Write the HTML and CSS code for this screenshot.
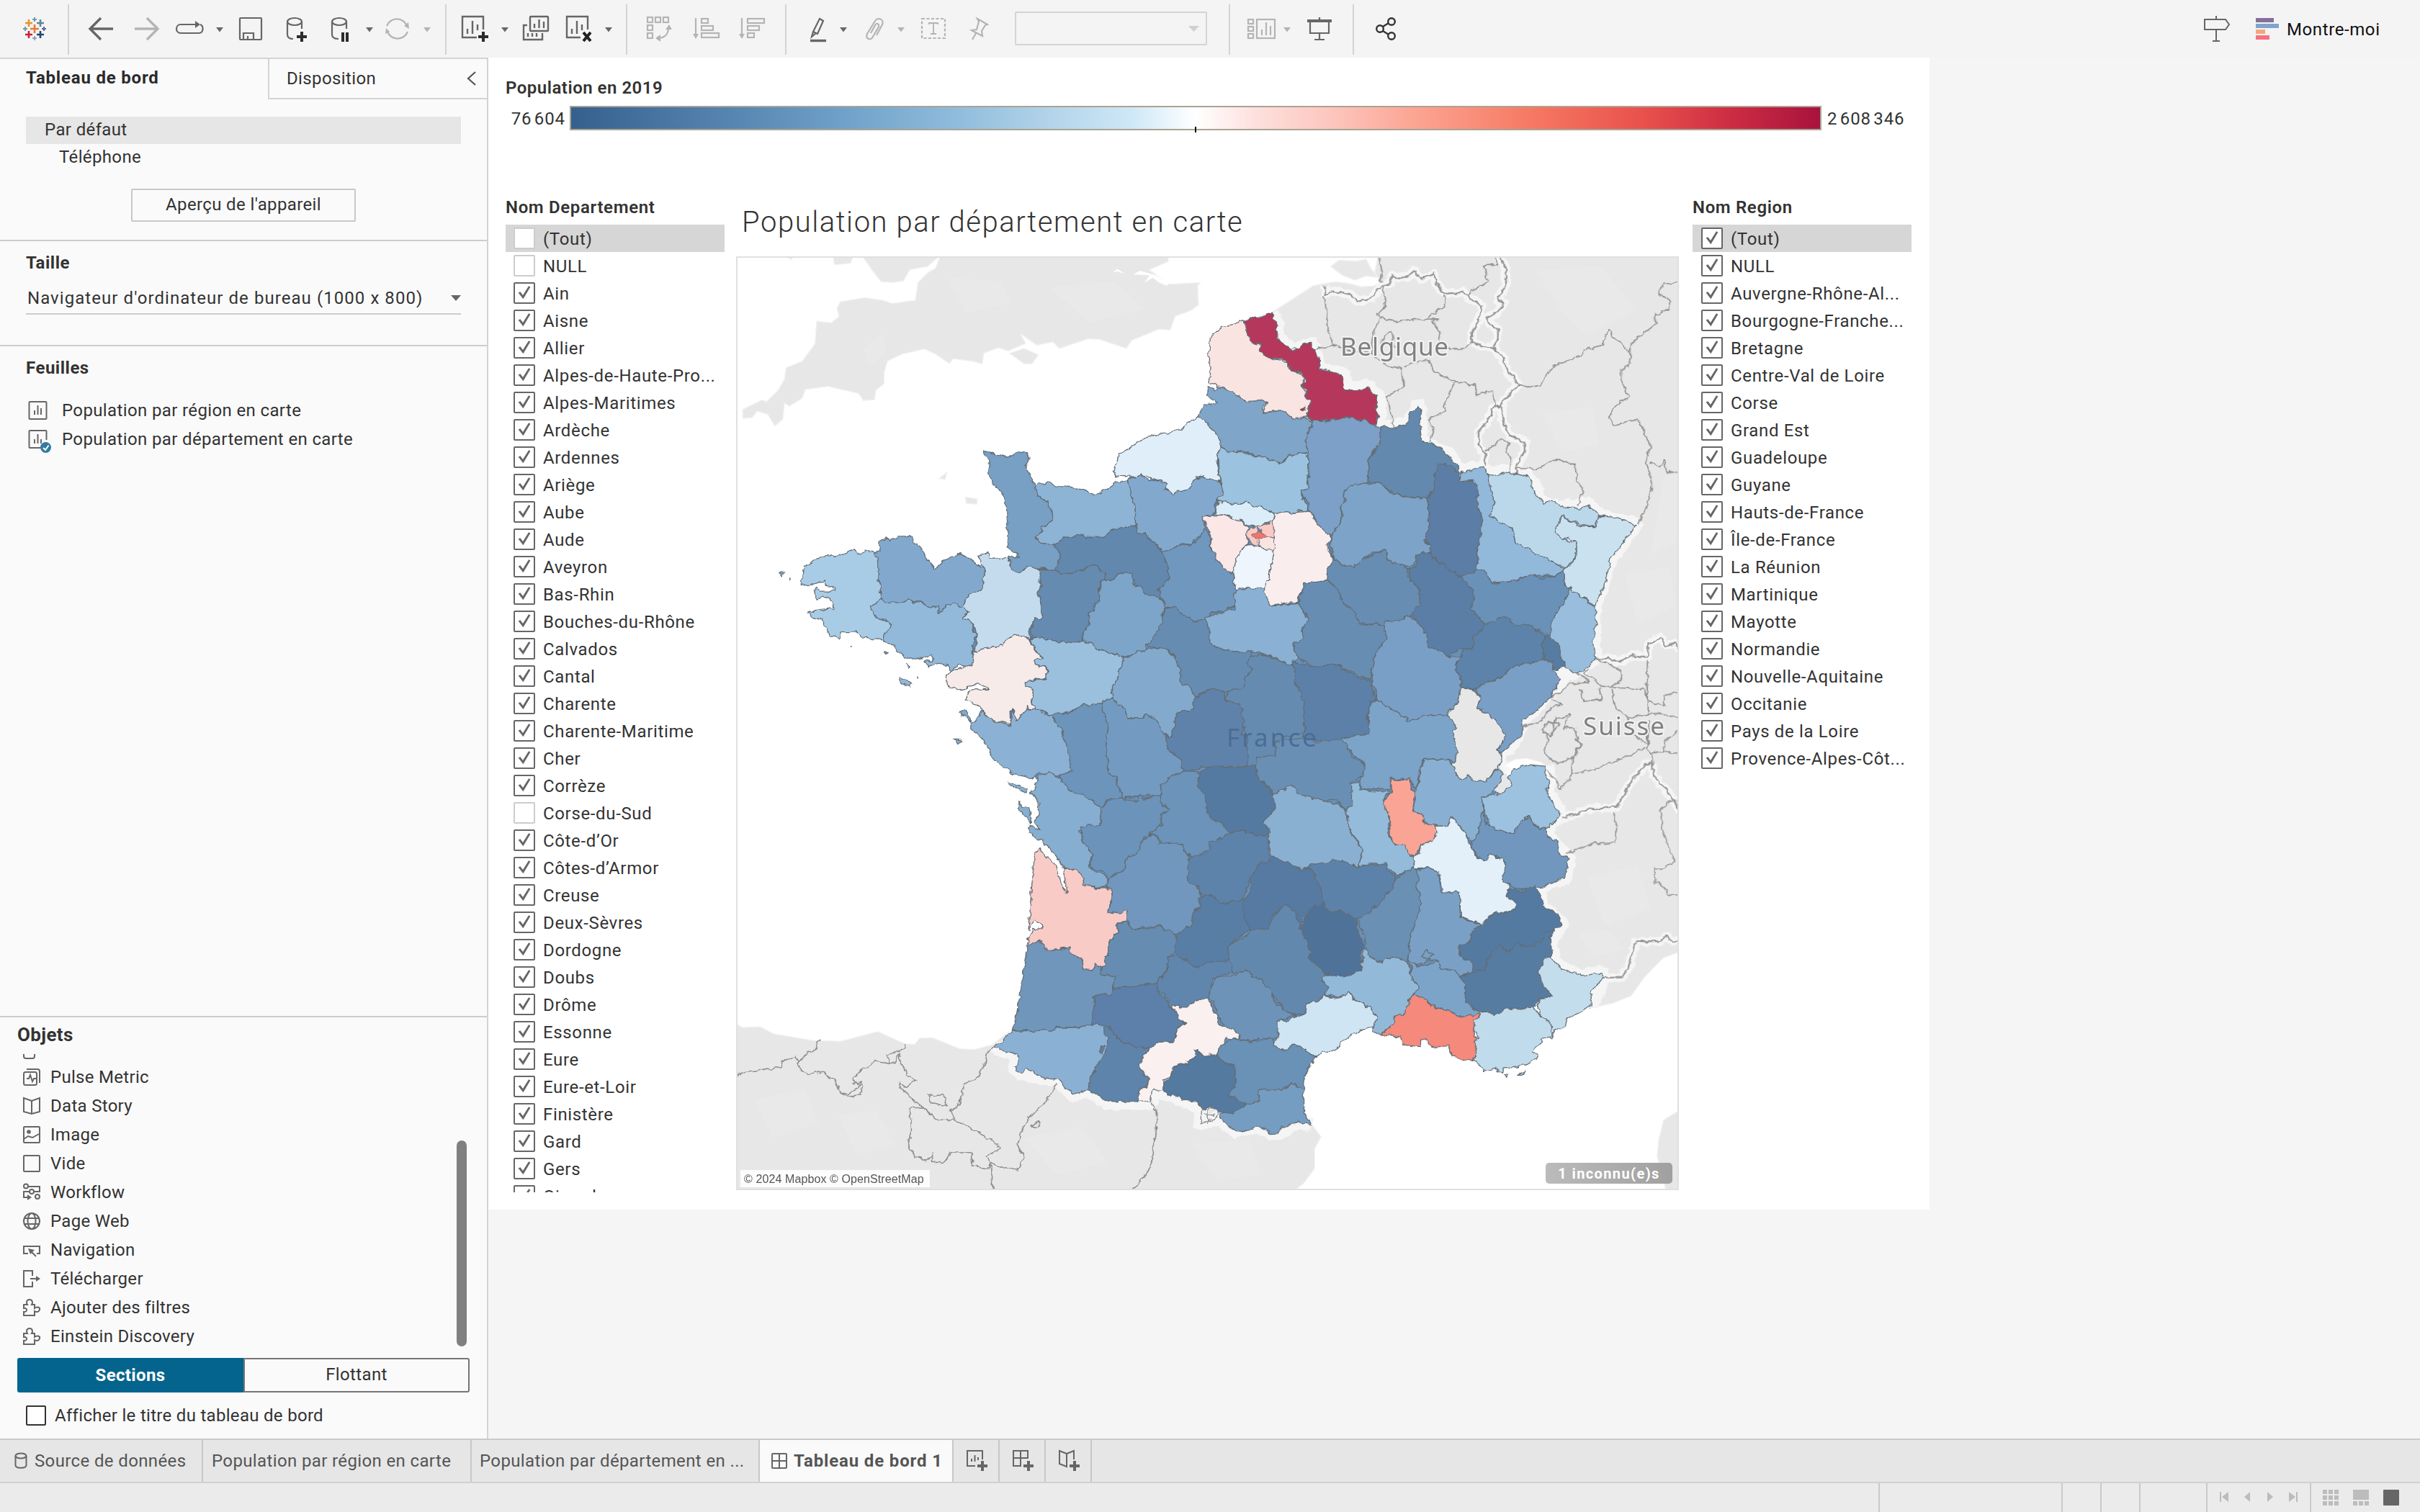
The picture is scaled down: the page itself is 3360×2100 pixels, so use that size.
FILE: index.html
```html
<!DOCTYPE html>
<html lang="fr">
<head>
<meta charset="utf-8">
<title>Tableau de bord 1</title>
<link rel="stylesheet" href="styles.css">
</head>
<body>
<div class="app">

<header class="toolbar">
  <svg width="94" height="80" viewBox="0 0 94 80" fill="none" stroke-width="2.6">
    <path stroke="#eb7a2f" d="M48 34v12M42 40h12"/>
    <path stroke="#e8932f" d="M40 27v10M35 32h10"/>
    <path stroke="#5b879b" d="M56 27v10M51 32h10"/>
    <path stroke="#c8233c" d="M40 43v10M35 48h10"/>
    <path stroke="#1f447e" d="M56 43v10M51 48h10"/>
    <g stroke-width="2"><path stroke="#7199a6" d="M48 24v6M45 27h6M35 37v6M32 40h6"/><path stroke="#5c6692" d="M61 37v6M58 40h6"/><path stroke="#9aa0be" d="M48 50v6M45 53h6"/></g>
  </svg>
  <i class="sep"></i>
  <svg width="76" height="80" viewBox="96 0 76 80" fill="none" stroke="#666" stroke-width="3.4"><path d="M157 40h-32M140 25l-15 15 15 15"/></svg>
  <svg width="58" height="80" viewBox="172 0 58 80" fill="none" stroke="#b4b4b4" stroke-width="3.4"><path d="M187 40h32M204 25l15 15-15 15"/></svg>
  <svg width="88" height="80" viewBox="230 0 88 80" fill="none" stroke="#666" stroke-width="2.2"><path d="M272 34h-21c-8 0-8 12 0 12h25c7 0 7-10 2-12"/><path fill="#666" stroke="none" d="M271 29l7 5-7 5zM300 38h10l-5 6.500z"/></svg>
  <svg width="64" height="80" viewBox="318 0 64 80" fill="none" stroke="#666" stroke-width="2.2"><rect x="333" y="25" width="30" height="30" rx="1"/><path d="M338 55v-9h14v9M344 55v-5"/></svg>
  <svg width="60" height="80" viewBox="382 0 60 80" fill="none" stroke="#666" stroke-width="2.2"><ellipse cx="409" cy="30" rx="10" ry="5"/><path d="M399 30v18c0 4 3 6 8 6M419 30v10"/><path stroke="#2b2b2b" stroke-width="4" d="M419 44v14M412 51h14"/></svg>
  <svg width="82" height="80" viewBox="442 0 82 80" fill="none" stroke="#666" stroke-width="2.2"><ellipse cx="471" cy="30" rx="10" ry="5"/><path d="M461 30v18c0 4 3 6 9 6M481 30v10"/><path stroke="#2b2b2b" stroke-width="4" d="M476 45v13M482 45v13"/><path fill="#666" stroke="none" d="M508 38h10l-5 6.500z"/></svg>
  <svg width="94" height="80" viewBox="524 0 94 80" fill="none" stroke="#b4b4b4" stroke-width="2.2"><path d="M537 36a15 15 0 0 1 28 0M566 44a15 15 0 0 1-28 0"/><path fill="#b4b4b4" stroke="none" d="M561 36l6-5 1 9zM541 44l-5-5-1 8zM588 38h10l-5 6.500z"/></svg>
  <i class="sep"></i>
  <svg width="92" height="80" viewBox="620 0 92 80" fill="none" stroke="#666" stroke-width="2.4"><path d="M662 52h-20V23h29v18M649 47v-7M656 47V29M663 42v-8"/><path stroke="#2b2b2b" stroke-width="4" d="M671 44v14M664 51h14"/><path fill="#666" stroke="none" d="M696 38h10l-5 6.500z"/></svg>
  <svg width="62" height="80" viewBox="712 0 62 80" fill="none" stroke="#666" stroke-width="2.4"><rect x="736" y="23" width="25" height="20" rx="1"/><path d="M732 35h-5v20h26v-9M742 39v-6M748.500 39V27M755 39V30M733 51v-5M739 51v-5M745 51v-5"/></svg>
  <svg width="95" height="80" viewBox="774 0 95 80" fill="none" stroke="#666" stroke-width="2.4"><path d="M806 52h-19V23h29v18M794 47v-7M801 47V29M808 42v-8"/><path stroke="#222" stroke-width="4" d="M810 45l10 12M820 45l-10 12"/><path fill="#666" stroke="none" d="M840 38h10l-5 6.500z"/></svg>
  <i class="sep"></i>
  <svg width="75" height="80" viewBox="871 0 75 80" fill="none" stroke="#b4b4b4" stroke-width="2.2"><rect x="899" y="24" width="7" height="7"/><rect x="910" y="24" width="7" height="7"/><rect x="921" y="24" width="7" height="7"/><rect x="899" y="35" width="7" height="7"/><rect x="899" y="46" width="7" height="7"/><path d="M928 39c0 8-5 13-13 14"/><path fill="#b4b4b4" stroke="none" d="M924 41l5-7 4 7zM917 48l-7 5 7 5z"/></svg>
  <svg width="64" height="80" viewBox="946 0 64 80" fill="none" stroke="#b4b4b4" stroke-width="2.2"><path d="M966 25v24"/><path fill="#b4b4b4" stroke="none" d="M962 47h8l-4 7z"/><rect x="974" y="26" width="9" height="6"/><rect x="974" y="36" width="16" height="6"/><rect x="974" y="46" width="24" height="6"/></svg>
  <svg width="80" height="80" viewBox="1010 0 80 80" fill="none" stroke="#b4b4b4" stroke-width="2.200"><path d="M1030 25v24"/><path fill="#b4b4b4" stroke="none" d="M1026 47h8l-4 7z"/><rect x="1038" y="26" width="23" height="6"/><rect x="1038" y="36" width="16" height="6"/><rect x="1038" y="46" width="9" height="6"/></svg>
  <i class="sep"></i>
  <svg width="94" height="80" viewBox="1092 0 94 80" fill="none" stroke="#666" stroke-width="2.200"><path d="M1138 26l5 3-8 18-6-3zM1129 44l-2 7 6-5"/><path stroke-width="3.400" d="M1125 56.500h22"/><path fill="#666" stroke="none" d="M1166 38h10l-5 6.500z"/></svg>
  <svg width="78" height="80" viewBox="1186 0 78 80" fill="none" stroke="#b4b4b4" stroke-width="2.200"><path d="M1217 49l8-15c3-7-6-11-10-5l-11 18c-3 7 5 10 8 4l8-14c1-5-4-5-5-2l-6 11"/><path fill="#b4b4b4" stroke="none" d="M1246 38h10l-5 6.500z"/></svg>
  <svg width="64" height="80" viewBox="1264 0 64 80" fill="none" stroke="#b4b4b4" stroke-width="2.200"><rect x="1280" y="26" width="32" height="27" stroke-dasharray="4 2.500"/><path stroke-width="1.800" d="M1290 34v-2h12v2M1296 32v15M1292 47h8"/></svg>
  <svg width="66" height="80" viewBox="1328 0 66 80" fill="none" stroke="#b4b4b4" stroke-width="2.200"><path d="M1357 26l14 8-3 1-5 8 1 7-15-8 7-1 3-11zM1355 46l-5 9"/></svg>
  <div class="combo"><svg width="16" height="10" viewBox="0 0 16 10"><path fill="#d0d0d0" d="M0 1h15L7.500 9z"/></svg></div>
  <i class="sep"></i>
  <svg width="94" height="80" viewBox="1708 0 94 80" fill="none" stroke="#b4b4b4" stroke-width="2.200"><rect x="1733" y="27" width="7" height="6"/><rect x="1733" y="37" width="7" height="6"/><rect x="1733" y="47" width="7" height="6"/><rect x="1745" y="27" width="25" height="26"/><path d="M1752 49v-8M1758 49V31M1764 49V36"/><path fill="#b4b4b4" stroke="none" d="M1782 38h10l-5 6.500z"/></svg>
  <svg width="76" height="80" viewBox="1802 0 76 80" fill="none" stroke="#666" stroke-width="2.200"><path stroke-width="4" d="M1815 29h34"/><path d="M1819 30v16h26V30M1832 24v4M1832 46v9M1825 55h14"/></svg>
  <i class="sep"></i>
  <svg width="80" height="80" viewBox="1880 0 80 80" fill="none" stroke="#333" stroke-width="2.400"><circle cx="1932" cy="30" r="4.800"/><circle cx="1916" cy="40" r="4.800"/><circle cx="1932" cy="50" r="4.800"/><path d="M1920 37l8-5M1920 43l8 5"/></svg>
  <span class="grow"></span>
  <svg width="72" height="80" viewBox="3040 0 72 80" fill="none" stroke="#666" stroke-width="2"><path d="M3061 27h29l5 7-5 7h-29zM3077 22v5M3077 41v15M3072 57h10"/></svg>
  <svg width="52" height="80" viewBox="3112 0 52 80"><path fill="#85709a" d="M3132 25h25v6h-25z"/><path fill="#80a4cd" d="M3132 33h32v6h-32z"/><path fill="#f3a77c" d="M3132 41h13v6h-13z"/><path fill="#f8707f" d="M3132 49h19v6h-19z"/></svg>
  <span class="showme">Montre-moi</span>
</header>

<main class="body">
<aside class="side">
  <div class="tabs">
    <div class="tab tab-on">Tableau de bord</div>
    <div class="tab tab-off">Disposition<svg width="14" height="20" viewBox="0 0 14 20" fill="none" stroke="#555" stroke-width="2.200"><path d="M12 1L2 10l10 9"/></svg></div>
  </div>
  <div class="devices">
    <div class="device device-on">Par défaut</div>
    <div class="device phone">Téléphone</div>
    <button class="preview">Aperçu de l'appareil</button>
  </div>
  <section class="block">
    <h2>Taille</h2>
    <div class="select"><span>Navigateur d'ordinateur de bureau (1000 x 800)</span><svg width="14" height="8" viewBox="0 0 14 8"><path fill="#666" d="M0 0h14L7 8z"/></svg></div>
  </section>
  <section class="block sheets">
    <h2>Feuilles</h2>
    <div class="sheet"><svg width="40" height="40" viewBox="0 0 40 40" fill="none" stroke="#666" stroke-width="2"><rect x="4.500" y="8" width="24" height="24" rx="1"/><path d="M12 26v-6M16.500 26V13M21 26v-9"/></svg><span>Population par région en carte</span></div>
    <div class="sheet"><svg width="40" height="40" viewBox="0 0 40 40" fill="none" stroke="#666" stroke-width="2"><path d="M20 32H5.500q-1 0-1-1V9q0-1 1-1h22q1 0 1 1v12M12 26v-6M16.500 26V13M21 26v-6"/><circle cx="27.500" cy="31.500" r="7.500" fill="#2f7c9e" stroke="none"/><path stroke="#fff" d="M24 32l3 3 4.500-6.500"/></svg><span>Population par département en carte</span></div>
  </section>
  <section class="objects">
    <h2>Objets</h2>
    <div class="scroller">
      <ul>
        <li><svg viewBox="0 0 24 24"><rect x="1" y="1" width="15" height="25" rx="3"/></svg>Extension</li>
        <li><svg viewBox="0 0 24 24"><rect x="1" y="5" width="18" height="18" rx="2.500"/><path d="M5 1h15q3 0 3 3v16M5 14h3l2-5 3 9 2-4h3"/></svg>Pulse Metric</li>
        <li><svg viewBox="0 0 24 24"><path d="M12 5L1 1v19l11 3 11-3V1zM12 5v18"/></svg>Data Story</li>
        <li><svg viewBox="0 0 24 24"><rect x="1" y="1" width="22" height="22" rx="1"/><path d="M1 18l6-4 6 2 9-5"/><circle class="solid" cx="8" cy="8" r="2.800"/></svg>Image</li>
        <li><svg viewBox="0 0 24 24"><rect x="1" y="1" width="22" height="22" rx="1"/></svg>Vide</li>
        <li><svg viewBox="0 0 24 24"><circle cx="4" cy="3.500" r="3"/><circle cx="12" cy="11" r="3"/><circle cx="20" cy="18" r="3"/><path d="M7 4h16v7h-8M9 11H1v8h7"/><path class="solid" d="M6 15l6 4-6 4z"/></svg>Workflow</li>
        <li><svg viewBox="0 0 24 24"><circle cx="12" cy="12" r="11"/><ellipse cx="12" cy="12" rx="5.500" ry="11"/><path d="M2 8h20M2 16h20"/></svg>Page Web</li>
        <li><svg viewBox="0 0 24 24"><path d="M7 17H1V7h22v10h-4M10 13l8 8"/><path class="solid" d="M7 10l9 2-6 6z"/></svg>Navigation</li>
        <li><svg viewBox="0 0 24 24"><path d="M13 8V1H1v22h12v-7M10 12h10"/><path class="solid" d="M18 8l6 4-6 4z"/></svg>Télécharger</li>
        <li><svg viewBox="0 0 24 24"><path d="M1 23v-5c5 1 6-6 0-5V8h5c-2-3-1-7 3-7s5 4 3 7h4v5c4-3 8-1 7 2s-4 4-7 2v6z"/></svg>Ajouter des filtres</li>
        <li><svg viewBox="0 0 24 24"><path d="M1 23v-5c5 1 6-6 0-5V8h5c-2-3-1-7 3-7s5 4 3 7h4v5c4-3 8-1 7 2s-4 4-7 2v6z"/></svg>Einstein Discovery</li>
      </ul>
      <div class="track"><i class="thumb"></i></div>
    </div>
    <div class="segment"><b>Sections</b><span>Flottant</span></div>
    <label class="show-title"><i></i>Afficher le titre du tableau de bord</label>
  </section>
</aside>

<div class="workspace">
<div class="board">
  <div class="legend">
    <h3>Population en 2019</h3>
    <div class="scale"><span class="min">76 604</span><div class="ramp"><i class="mid"></i></div><span class="max">2 608 346</span></div>
  </div>
  <div class="columns">
    <div class="filter">
      <h3>Nom Departement</h3>
      <ul class="dep">
        <li class="all"><i></i>(Tout)</li><li><i></i>NULL</li>
        <li class="on"><i></i>Ain</li><li class="on"><i></i>Aisne</li><li class="on"><i></i>Allier</li><li class="on"><i></i>Alpes-de-Haute-Pro...</li>
        <li class="on"><i></i>Alpes-Maritimes</li><li class="on"><i></i>Ardèche</li><li class="on"><i></i>Ardennes</li><li class="on"><i></i>Ariège</li>
        <li class="on"><i></i>Aube</li><li class="on"><i></i>Aude</li><li class="on"><i></i>Aveyron</li><li class="on"><i></i>Bas-Rhin</li>
        <li class="on"><i></i>Bouches-du-Rhône</li><li class="on"><i></i>Calvados</li><li class="on"><i></i>Cantal</li><li class="on"><i></i>Charente</li>
        <li class="on"><i></i>Charente-Maritime</li><li class="on"><i></i>Cher</li><li class="on"><i></i>Corrèze</li><li><i></i>Corse-du-Sud</li>
        <li class="on"><i></i>Côte-d’Or</li><li class="on"><i></i>Côtes-d’Armor</li><li class="on"><i></i>Creuse</li><li class="on"><i></i>Deux-Sèvres</li>
        <li class="on"><i></i>Dordogne</li><li class="on"><i></i>Doubs</li><li class="on"><i></i>Drôme</li><li class="on"><i></i>Essonne</li>
        <li class="on"><i></i>Eure</li><li class="on"><i></i>Eure-et-Loir</li><li class="on"><i></i>Finistère</li><li class="on"><i></i>Gard</li>
        <li class="on"><i></i>Gers</li><li class="on"><i></i>Gironde</li>
      </ul>
    </div>
    <div class="viz">
      <h1>Population par département en carte</h1>
      <div class="map">
<svg width="1309" height="1297" viewBox="1022 356 1309 1297">
  <defs>
    <filter id="rough" filterUnits="userSpaceOnUse" x="1022" y="356" width="1309" height="1297">
      <feTurbulence type="fractalNoise" baseFrequency="0.11" numOctaves="2" seed="4" result="n"/>
      <feDisplacementMap in="SourceGraphic" in2="n" scale="8" xChannelSelector="R" yChannelSelector="G"/>
    </filter>
  </defs>
  <!-- land -->
  <g fill="#e7e7e7" stroke="#f3f3f3" stroke-width="3">
    <g transform="translate(1020 350) scale(.44643)">
      <path d="M25 518L25 490 85 460 100 465 135 430 155 395 160 360 210 340 250 285 255 215 300 220 325 200 318 175 328 155 405 142 460 150 490 160 562 150 570 95 600 65 625 50 640 10 1350 10 1348 30 1290 55 1350 100 1448 95 1440 105 1443 165 1420 182 1370 200 1355 243 1320 240 1235 275 1218 300 1135 272 1100 270 1010 300 990 280 940 290 890 255 905 285 850 308 820 298 775 315 770 348 740 340 680 332 668 347 620 315 590 302 520 318 475 340 465 375 465 410 440 430 435 460 400 462 385 440 340 430 290 418 220 428 210 455 170 480 155 470 150 520 125 542 103 505 70 495 55 515Z"/>
      <path d="M855 315L900 300 945 320 925 348 900 348ZM395 10L430 60 455 92 490 95 525 90 545 55 600 45 640 10ZM305 10L310 40 360 35 370 10ZM635 705L660 685 655 708ZM717 762L755 768 753 785 720 782ZM155 10L175 24 190 10Z"/>
      <path fill="#fff" stroke="none" d="M1175 65L1190 52 1213 68 1190 60ZM1240 70L1260 58 1310 72 1350 95 1345 105 1320 95 1300 80 1275 95 1290 72Z"/>
    </g>
    <g transform="translate(1640 350) scale(.44643)">
      <path d="M195 214L283 187 410 105 445 98 480 92 520 97 560 108 600 105 622 92 600 70 612 10 1560 10 1560 2174 1500 2196 1440 2257 1400 2314 1340 2338 1275 2352 900 1900 500 1200 300 400Z"/>
      <path d="M465 45L490 25 545 28 575 22 590 50 612 80 575 75 540 88 500 72Z"/>
    </g>
    <g transform="translate(1020 1000) scale(.44643 .42091)">
      <path d="M0 1000L25 1015 80 1012 120 1035 240 1057 330 1060 445 1028 530 1068 560 1070 575 1050 615 1048 700 1085 745 1087 800 1072 850 1030 1200 1000 1700 1200 1795 1335 1824 1375 1804 1415 1804 1480 1769 1530 1729 1562 0 1562Z"/>
    </g>
    <g transform="translate(1640 1000) scale(.44643 .42091)">
      <path d="M1560 1280L1500 1320 1485 1385 1480 1440 1510 1562 1560 1562Z"/>
      <path fill="#fff" d="M1015 185L1000 150 1040 130 1075 127 1120 140 1135 153 1080 150 1030 180Z"/>
    </g>
  </g>
  <!-- relief -->
  <g fill="#efefef" opacity=".28">
    <g transform="translate(1640 350) scale(.44643)"><path d="M1100 60L1300 40 1420 180 1260 260 1180 180ZM1500 700L1548 690 1548 900 1460 940ZM1380 1000L1520 980 1540 1100 1420 1160ZM1120 500L1280 480 1300 600 1180 620Z"/></g>
    <g transform="translate(1020 1000) scale(.44643 .42091)"><path d="M60 1250L220 1220 260 1330 120 1380ZM900 1380L1080 1340 1160 1460 1000 1500ZM320 1300L440 1290 500 1400 380 1440ZM1420 1400L1600 1380 1640 1500 1500 1520Z"/></g>
    <g transform="translate(1640 1000) scale(.44643 .42091)"><path d="M1260 520L1420 480 1460 620 1320 680ZM1230 700L1330 690 1380 760 1280 780Z"/></g>
    <g transform="translate(1020 350) scale(.44643)"><path d="M660 80L830 90 860 160 720 190ZM980 110L1180 90 1280 180 1100 220ZM400 300L460 250 470 310 420 360Z"/></g>
  </g>
  <!-- borders of neighbouring countries -->
  <g filter="url(#rough)" fill="none" stroke-linejoin="round">
    <g stroke="#f5f5f5" stroke-width="46">
      <g transform="translate(1640 350) scale(.44643)">
        <path d="M283 188L298 230 300 270 345 310 405 285 432 365 500 380 510 430 580 420 612 450 615 510 602 540 660 547 710 530 738 480 748 592 835 635 868 685 935 670 958 690 1015 683 1080 700 1125 785 1190 795 1265 785 1300 822 1413 848 1335 955 1285 1102 1280 1215 1288 1265 1225 1308 1160 1305 1182 1330 1062 1455 1030 1530 990 1560"/>
        <path stroke-width="28" d="M445 105L450 130 480 122 520 130 550 152 590 145 625 105 650 95 655 75 700 80 725 58 745 85 785 68 795 100 820 130 880 125 895 145 935 165 930 200 905 250 905 280 940 295 975 300 1000 330 1015 370 1050 415 1030 430 1005 460 995 480 1000 520 1020 570 1070 590 1070 620 1045 660 1045 690M990 10L1010 50 1010 100 985 150 1005 160 980 190 950 205 960 225 985 240 985 270 970 295M995 480L975 480 950 530 925 560 925 600 945 630 945 665M1288 1265L1330 1265 1360 1275 1400 1255 1450 1260 1455 1220 1490 1200 1510 1225 1535 1215 1552 1240"/>
      </g>
      <g transform="translate(1640 1000) scale(.44643 .42091)">
        <path d="M990 105L985 160 1005 180M1135 153L1145 200 1135 235 1175 300 1175 320 1140 345 1140 385 1205 460 1195 520 1105 550 1125 615 1185 675 1150 720 1152 780 1185 825 1250 845 1305 833 1312 850 1275 945"/>
        <path stroke-width="28" d="M1465 145L1445 145 1400 205 1350 290 1280 290 1185 325M1465 145L1470 185 1530 260 1552 305M1310 850L1370 850 1390 820 1415 730 1490 730 1510 710 1530 735 1552 720"/>
      </g>
      <g transform="translate(1020 1000) scale(.44643 .42091)">
        <path d="M805 1078L850 1095 885 1105 872 1145 892 1165 960 1180 1010 1188 1050 1235 1100 1222 1160 1262 1255 1262 1293 1262 1298 1220 1400 1255 1455 1285 1450 1330 1509 1315 1554 1355 1629 1340 1669 1365 1694 1362 1750 1328 1796 1335"/>
      </g>
    </g>
    <g stroke="#8c8c8c" stroke-width="3.600">
      <g transform="translate(1640 350) scale(.44643)">
        <path stroke-width="5" stroke="#929292" d="M445 105L450 130 480 122 520 130 550 152 590 145 625 105 650 95 655 75 700 80 725 58 745 85 785 68 795 100 820 130 880 125 895 145 935 165 930 200 905 250 905 280 940 295 975 300 1000 330 1015 370 1050 415 1030 430 1005 460 995 480 1000 520 1020 570 1070 590 1070 620 1045 660 1045 690M990 10L1010 50 1010 100 985 150 1005 160 980 190 950 205 960 225 985 240 985 270 970 295M995 480L975 480 950 530 925 560 925 600 945 630 945 665M1288 1265L1330 1265 1360 1275 1400 1255 1450 1260 1455 1220 1490 1200 1510 1225 1535 1215 1552 1240"/>
        <path d="M612 10L625 60 620 95M978 10L980 40 940 38 955 95 905 115 895 145M630 105L635 170 610 190 615 205 660 215 720 210 800 208 780 215 805 250 800 275 835 300 880 300 905 285M820 135L815 170 770 205M445 135L450 180 455 240 475 290 430 300 345 300M475 290L520 305 590 315 600 250 615 210M590 315L640 355 685 360 690 420 635 450 650 480 660 547M690 355L770 335 785 370 850 405 820 470 820 495 770 520 785 560 770 592M850 405L915 415 920 445 970 430 975 480M1050 415L1080 420 1120 415 1130 385 1160 355 1240 325 1250 305 1310 290 1330 240 1345 265 1395 310 1395 350 1370 365 1370 400 1390 450 1350 480 1330 515 1350 540 1420 520 1440 560 1460 605 1445 650 1465 720 1445 800 1420 848M1395 310L1400 285 1430 260 1475 225 1475 195 1515 180 1520 150 1485 130 1500 100 1552 95M1455 655L1490 670 1500 650 1510 680 1552 690M945 620L975 600 985 585 1020 590 1010 625 1025 640 1020 680M1045 670L1100 675 1170 645 1225 665 1230 710 1250 735 1235 790M620 290L630 255 655 250 665 300"/>
        <path d="M1225 1308L1270 1335 1210 1345 1180 1370 1145 1385M1288 1265L1320 1280 1365 1300 1370 1330 1340 1355 1300 1350 1285 1330 1250 1310 1265 1300M1240 1360L1255 1400 1305 1390 1300 1355M1340 1355L1440 1360 1450 1395 1500 1410 1505 1380 1552 1365M1450 1270L1448 1330 1450 1360M1340 1360L1350 1420 1390 1450 1400 1500M1390 1450L1440 1440 1480 1435 1552 1450M1060 1478L1120 1460 1145 1420 1180 1410 1150 1390M1125 1490L1150 1510 1165 1450 1210 1440 1190 1480 1225 1480 1240 1540 1225 1568M1120 1490L1140 1460 1175 1470 1150 1500M1450 1350L1450 1440M1400 1500L1450 1530 1455 1480"/>
      </g>
      <g transform="translate(1640 1000) scale(.44643 .42091)">
        <path stroke-width="5" stroke="#929292" d="M1465 145L1445 145 1400 205 1350 290 1280 290 1185 325M1465 145L1470 185 1530 260 1552 305M1310 850L1370 850 1390 820 1415 730 1490 730 1510 710 1530 735 1552 720M990 105L985 160 1005 180"/>
        <path d="M1225 60L1245 80 1215 125 1170 145 1130 110 1140 60 1125 30M1215 120L1215 185 1180 225 1140 165M1215 180L1300 155 1450 90 1455 0M1450 90L1465 125 1465 145M1455 110L1500 105 1552 110M1500 105L1505 70 1552 30M1530 260L1490 300 1500 380 1535 465 1500 490 1470 490 1475 535 1500 550 1515 580 1552 572M1345 305L1355 350 1350 405 1270 410 1195 440"/>
      </g>
      <g transform="translate(1020 1000) scale(.44643 .42091)">
        <path d="M0 1190L20 1162 85 1155 145 1145 150 1125 190 1108 200 1130 225 1100 250 1090 262 1058M195 1115L200 1150 230 1168 275 1160 315 1190 325 1225 345 1240 395 1238 395 1205 370 1190 385 1165 435 1125 480 1135 475 1105 530 1085 533 1070M330 1228L350 1235 385 1215 390 1190 370 1200M480 1135L500 1128 510 1100 515 1120 535 1170 565 1190 530 1210 510 1195 515 1210 540 1240 600 1290 625 1318 690 1322 745 1350 825 1410 785 1440 800 1465 850 1480 880 1485 900 1445 880 1400 900 1330 960 1270 1000 1200M805 1078L785 1100 780 1130 750 1185 715 1200 700 1270 670 1285 685 1318M545 1280L550 1350 540 1400 560 1440 600 1455 615 1430 615 1460 650 1460 670 1425 735 1430 740 1470 785 1480 795 1465 795 1500 805 1562M545 1280L600 1285M600 1235L650 1240 660 1275 610 1265ZM1295 1265L1315 1290 1300 1450 1275 1510 1225 1562M925 1340L945 1325 950 1335 930 1345ZM1450 1290L1460 1275 1505 1290 1495 1315 1450 1330ZM1460 1300L1490 1305M1475 1280L1470 1330"/>
      </g>
    </g>
  </g>
  <!-- departments -->
  <g filter="url(#rough)" stroke="#646d75" stroke-width="3" stroke-linejoin="round">
    <g transform="translate(1640 350) scale(.44643)">
      <path fill="#6b8fb5" stroke="none" d="M100 500L380 600 600 600 850 750 1180 1000 1200 1230 980 1400 930 1650 1080 1750 1100 1950 1120 2150 900 2370 500 2350 300 2450 300 2600 100 2570 -250 2480 -450 2400 -320 2050 -320 1900 -400 1700 -520 1560 -560 1330 -700 1220 -1050 1120 -900 980 -550 1050 -480 850 -380 760 -150 760 0 600Z"/>
      <path fill="#e7e7e7" d="M870 1355L905 1358 932 1390 920 1420 960 1440 990 1470 1008 1505 985 1548 1000 1575 985 1602 945 1645 910 1645 895 1630 870 1645 840 1607 858 1550 845 1490 858 1480 825 1440 858 1405Z"/>
    </g>
    <g transform="translate(1020 350) scale(.44643)">
      <path fill="#789fc4" d="M777 618L800 628 840 639 860 636 880 622 908 626 916 648 904 668 928 712 938 728 940 752 965 778 978 780 985 805 988 830 972 850 952 855 957 868 935 888 948 905 992 911 1012 940 1012 960 995 990 950 985 912 978 885 1002 862 990 850 948 868 952 886 946 882 938 862 932 850 912 848 835 843 770 822 738 802 720 788 675 794 650 776 632Z"/>
      <path fill="#8db3d5" d="M940 730L948 720 974 717 1000 730 1082 737 1117 752 1145 745 1190 715 1222 708 1228 740 1245 790 1250 850 1230 855 1180 860 1150 885 1130 888 1092 888 1078 878 1062 886 1028 888 992 911 948 905 935 888 957 868 952 855 972 850 988 830 985 805 978 780 965 778 940 752Z"/>
      <path fill="#e0eefa" d="M1177 682L1196 628 1230 608 1280 577 1320 569 1370 557 1400 543 1437 512 1450 512 1500 560 1520 605 1505 620 1500 660 1508 714 1450 700 1430 705 1418 730 1400 742 1365 760 1348 742 1325 714 1263 692 1245 700 1190 697Z"/>
      <path fill="#82a9cd" d="M1222 708L1263 692 1290 710 1325 714 1350 718 1336 738 1348 742 1365 760 1378 742 1400 742 1418 730 1430 705 1450 700 1505 714 1520 755 1500 770 1490 815 1455 822 1462 858 1450 885 1435 888 1425 910 1390 907 1380 914 1328 936 1312 912 1280 878 1250 875 1245 860 1250 850 1245 790 1228 740Z"/>
      <path fill="#6288ae" d="M992 912L1010 900 1028 888 1062 886 1078 878 1092 888 1130 888 1150 885 1180 860 1230 855 1243 852 1250 875 1280 878 1290 892 1312 912 1328 936 1335 950 1352 985 1350 1015 1318 1048 1328 1082 1300 1068 1278 1062 1265 1042 1240 1035 1235 1002 1218 996 1190 1005 1172 1022 1155 1022 1150 1000 1130 982 1115 972 1090 985 1060 995 1015 1003 995 990 1012 955 1012 940Z"/>
      <path fill="#7097be" d="M1328 936L1380 914 1425 910 1450 885 1462 858 1475 880 1480 920 1519 985 1549 1000 1559 1053 1555 1100 1530 1115 1480 1125 1468 1145 1430 1150 1400 1135 1370 1105 1335 1105 1342 1095 1328 1080 1318 1050 1350 1015 1352 985 1335 950Z"/>
      <path fill="#668bb0" d="M950 988L995 990 1015 1003 1060 995 1090 985 1115 972 1130 982 1150 1000 1152 1022 1135 1030 1135 1085 1120 1092 1115 1120 1100 1125 1103 1160 1080 1190 1087 1212 1060 1216 1010 1212 970 1205 920 1200 932 1142 955 1140 957 1120 945 1060 952 1040Z"/>
      <path fill="#7da5c9" d="M1152 1022L1172 1022 1190 1005 1218 996 1235 1002 1240 1035 1265 1042 1278 1062 1300 1068 1328 1082 1342 1098 1330 1115 1328 1155 1315 1185 1283 1225 1280 1235 1240 1252 1205 1262 1185 1250 1130 1240 1115 1218 1087 1212 1080 1185 1103 1160 1100 1125 1115 1120 1120 1092 1135 1085 1135 1030Z"/>
      <path fill="#82a9cd" d="M433 935L450 930 450 900 470 890 485 898 520 883 545 882 560 905 575 915 600 955 625 985 645 965 700 940 735 955 750 970 778 985 775 1050 730 1065 710 1100 690 1103 680 1090 655 1100 637 1125 635 1105 612 1108 590 1092 545 1080 520 1092 475 1092 458 1082 445 1010 450 990Z"/>
      <path fill="#c4dbee" d="M760 945L790 930 795 952 850 953 862 990 885 1000 912 978 950 988 950 1030 943 1060 957 1120 955 1140 932 1142 918 1180 915 1205 870 1190 845 1208 832 1225 790 1232 745 1245 755 1190 740 1150 712 1138 728 1120 710 1100 730 1065 770 1050 780 990 765 970Z"/>
      <path fill="#a9cce6" d="M209 1035L212 990 225 972 295 940 310 948 370 925 390 945 405 928 435 932 452 990 445 1020 452 1050 458 1082 420 1100 440 1140 478 1150 485 1170 460 1205 397 1198 375 1175 355 1182 330 1182 325 1200 294 1198 290 1175 275 1150 225 1125 250 1115 305 1108 307 1090 295 1078 270 1073 257 1083 245 1055 255 1045 262 1053 313 1053 305 1040 285 1038 280 1023 250 1032Z"/>
      <path fill="#92b9da" d="M420 1100L455 1083 475 1092 520 1092 545 1080 560 1090 590 1092 612 1108 635 1105 637 1125 655 1100 680 1090 690 1103 710 1100 728 1120 712 1138 740 1150 745 1180 755 1185 740 1225 745 1280 725 1290 700 1285 670 1302 668 1290 640 1278 605 1290 587 1275 620 1270 610 1255 575 1265 537 1266 520 1250 495 1228 465 1215 460 1195 485 1170 478 1150 440 1140ZM512 1322L530 1330 552 1345 545 1352 520 1343ZM534 1278L545 1290 540 1296ZM463 1243L480 1247 470 1251ZM138 1000L155 997 150 1008ZM172 1018L175 1021 172 1023ZM568 1319L573 1322 570 1324ZM364 1225L367 1228 364 1229Z"/>
      <path fill="#83aacd" d="M703 1430L718 1428 733 1450 733 1463 720 1445 708 1443ZM684 1515L700 1515 706 1522 695 1527Z"/>
      <path fill="#f7ebe9" d="M745 1245L790 1232 832 1225 845 1208 870 1190 915 1205 930 1230 955 1262 932 1270 935 1285 965 1292 972 1320 905 1340 928 1370 920 1395 937 1415 930 1428 910 1412 885 1450 870 1455 868 1425 856 1430 858 1470 820 1462 785 1450 760 1410 718 1393 732 1360 790 1358 760 1343 728 1350 708 1363 657 1350 655 1325 675 1300 700 1298 742 1280Z"/>
      <path fill="#9ac0de" d="M915 1200L970 1205 1010 1212 1060 1216 1087 1210 1115 1220 1135 1242 1160 1246 1205 1258 1207 1275 1195 1310 1175 1350 1175 1388 1145 1412 1080 1410 1050 1430 990 1440 950 1430 930 1425 937 1415 920 1395 928 1370 915 1355 900 1340 970 1325 970 1293 935 1285 932 1270 955 1262 930 1225Z"/>
      <path fill="#83aacd" d="M1207 1262L1235 1258 1250 1245 1280 1235 1310 1232 1335 1235 1370 1260 1375 1280 1388 1300 1385 1340 1415 1355 1433 1385 1425 1425 1380 1430 1365 1480 1358 1508 1340 1505 1310 1460 1280 1438 1265 1450 1225 1452 1210 1420 1175 1388 1175 1350 1200 1300Z"/>
      <path fill="#668cb1" d="M1335 1110L1370 1105 1395 1130 1430 1150 1467 1143 1474 1165 1479 1215 1519 1240 1607 1245 1611 1300 1589 1325 1587 1355 1530 1370 1490 1357 1433 1382 1415 1355 1385 1340 1388 1300 1375 1280 1370 1258 1335 1235 1283 1225 1310 1190 1328 1150Z"/>
      <path fill="#8bb1d4" d="M768 1428L790 1450 820 1465 858 1475 862 1425 880 1455 908 1418 950 1430 985 1440 1022 1500 1040 1560 1050 1615 1010 1630 975 1622 945 1622 925 1640 905 1632 870 1625 840 1605 803 1580 793 1550 770 1515 735 1482 733 1468 755 1455Z"/>
      <path fill="#6d94ba" d="M985 1440L1050 1432 1080 1410 1142 1406 1150 1440 1162 1480 1155 1540 1165 1622 1190 1630 1190 1650 1205 1696 1160 1706 1140 1734 1110 1703 1050 1682 1015 1649 1015 1630 1050 1615 1040 1560 1022 1500Z"/>
      <path fill="#739bc2" d="M1142 1408L1150 1395 1175 1388 1210 1420 1225 1452 1270 1450 1280 1438 1310 1455 1340 1505 1345 1541 1365 1564 1395 1583 1400 1612 1360 1630 1325 1659 1325 1687 1260 1696 1205 1699 1190 1650 1190 1630 1165 1622 1155 1540 1162 1480 1150 1440Z"/>
    </g>
    <g transform="translate(1020 1000) scale(.44643 .42091)">
      <path fill="#86aed0" d="M945 185L975 175 1013 190 1015 205 1050 240 1110 262 1140 295 1135 350 1100 348 1075 360 1080 400 1110 430 1105 490 1160 520 1160 550 1120 555 1085 540 1078 505 1045 490 1020 488 1005 455 960 405 918 375 918 350 950 360 932 335 945 310 948 275 922 238 935 215ZM852 210L870 210 910 230 905 240 870 225ZM882 270L895 285 915 290 925 320 920 345 910 320 885 298Z"/>
      <path fill="#6c93b9" d="M1140 295L1160 270 1185 257 1250 268 1260 250 1275 260 1325 245 1330 280 1350 295 1345 308 1328 310 1325 345 1305 370 1265 400 1262 425 1215 465 1212 495 1165 522 1145 500 1108 490 1112 440 1080 400 1075 358 1100 346 1135 350Z"/>
      <path fill="#6c93b9" d="M1325 215L1360 185 1400 168 1440 170 1448 185 1440 220 1468 250 1470 305 1510 335 1540 350 1540 380 1500 395 1478 425 1425 455 1395 430 1390 410 1330 410 1315 385 1290 375 1330 345 1330 310 1350 295 1328 270Z"/>
      <path fill="#7197be" d="M1165 522L1212 495 1215 465 1262 425 1265 400 1290 378 1315 385 1320 410 1350 405 1392 412 1397 430 1420 455 1410 500 1420 540 1445 560 1445 620 1425 635 1425 675 1380 705 1345 700 1325 680 1235 690 1220 655 1190 638 1160 630 1170 600 1172 560 1155 550Z"/>
      <path fill="#f9cbc6" d="M950 420L953 435 1000 480 1010 520 1025 560 1035 568 1028 530 1020 488 1045 490 1078 505 1085 540 1120 557 1170 555 1172 590 1165 610 1160 632 1200 640 1215 627 1222 640 1218 660 1200 665 1187 678 1195 695 1165 730 1163 775 1150 782 1153 805 1140 815 1122 805 1115 825 1087 822 1083 795 1040 765 1035 752 1000 758 965 755 965 740 945 730 914 745 913 722 927 690 945 692 957 685 950 672 932 658 914 693 920 600 933 445 940 430Z"/>
      <path fill="#6f96bb" d="M913 745L945 730 965 740 965 757 1000 758 1038 752 1045 768 1083 795 1088 822 1115 825 1122 805 1138 815 1140 838 1188 850 1175 885 1172 910 1140 905 1115 912 1120 940 1110 1008 1070 1015 1005 1015 980 1025 935 1028 862 1022 873 990 890 890 900 820 910 760Z"/>
      <path fill="#8ab1d4" d="M862 1022L900 1028 935 1028 980 1025 1005 1015 1070 1015 1110 1005 1145 1005 1155 1045 1165 1060 1150 1110 1120 1150 1103 1190 1100 1222 1075 1230 1050 1235 1010 1188 960 1180 905 1150 892 1165 875 1160 872 1145 885 1130 885 1105 850 1095 830 1090 805 1078 808 1068 835 1062Z"/>
      <path fill="#5f84ab" d="M1145 1003L1165 1015 1190 1050 1220 1070 1288 1083 1258 1130 1260 1145 1275 1165 1290 1180 1280 1210 1258 1215 1255 1262 1225 1260 1200 1255 1160 1262 1135 1240 1100 1222 1105 1190 1125 1140 1150 1105 1163 1055 1148 1040ZM1140 1070L1148 1068 1145 1100 1136 1098Z"/>
      <path fill="#5b80a9" d="M1175 885L1230 878 1315 868 1320 905 1340 920 1350 940 1400 1000 1380 1015 1362 1062 1320 1065 1290 1085 1220 1070 1190 1050 1165 1010 1110 1003 1112 970 1120 940 1117 910 1140 905 1172 905Z"/>
      <path fill="#668cb1" d="M1163 775L1165 730 1195 695 1187 678 1218 660 1235 690 1280 690 1325 680 1335 695 1365 698 1375 710 1372 770 1345 780 1345 820 1315 860 1310 870 1260 872 1180 888 1178 870 1190 850 1140 838 1138 818 1153 805 1148 782Z"/>
      <path fill="#6186ae" d="M1345 780L1375 778 1410 800 1440 815 1470 800 1539 788 1545 800 1557 830 1489 850 1474 912 1440 930 1410 950 1355 945 1340 905 1318 900 1315 862 1345 825Z"/>
      <path fill="#597ea5" d="M1375 705L1425 675 1425 640 1445 620 1450 582 1480 578 1520 605 1579 592 1590 640 1602 692 1534 745 1544 785 1530 795 1470 800 1440 818 1415 802 1375 778 1370 740Z"/>
    </g>
    <g transform="translate(1640 350) scale(.44643)">
      <path fill="#f9e4e2" d="M91 262L130 232 195 214 210 250 220 285 248 292 260 325 320 340 338 345 345 370 385 385 375 410 385 440 400 460 393 515 345 520 325 500 290 495 255 500 265 465 200 465 160 440 120 420 85 408 90 365 87 315Z"/>
      <path fill="#b5375b" d="M195 214L283 188 298 230 300 270 325 285 345 310 375 290 405 285 415 305 427 325 432 365 460 372 500 380 510 430 560 428 580 420 600 445 612 450 605 480 615 510 602 540 570 525 520 515 480 520 410 525 393 515 400 465 385 445 388 430 372 412 385 405 380 378 345 370 333 350 325 335 265 328 245 305 250 290 218 285ZM372 488L388 478 390 490 380 494Z"/>
      <path fill="#7fa5c8" d="M85 418L105 428 120 420 160 435 195 465 265 462 250 490 258 500 290 495 325 495 345 520 375 515 405 525 405 540 388 570 392 600 393 625 340 630 305 658 245 635 190 620 145 622 125 605 115 570 90 545 55 512 70 475 95 475 108 468 82 448Z"/>
      <path fill="#9bc2de" d="M125 608L148 622 190 622 220 635 250 635 305 660 345 628 393 625 395 700 392 735 372 740 378 765 395 800 385 805 290 815 255 795 195 780 160 785 110 775 115 760 130 755 120 715 115 660 115 630Z"/>
      <path fill="#7ba0c7" d="M405 525L440 525 515 515 575 525 600 540 620 548 618 590 583 645 580 720 545 725 505 742 510 780 495 805 500 830 465 885 440 870 405 810 390 800 398 785 380 765 372 742 392 735 398 700 392 600 388 575 408 540Z"/>
      <path fill="#6389ae" d="M618 543L660 547 710 530 712 500 738 480 748 490 742 540 748 592 790 600 835 635 860 660 862 690 835 665 795 660 790 700 785 745 765 765 725 765 660 752 620 718 583 715 583 645 618 600Z"/>
      <path fill="#7da4c8" d="M505 740L545 720 570 722 620 718 650 750 720 765 765 765 770 800 772 860 755 895 772 915 770 935 730 940 725 975 690 978 650 965 638 945 632 928 590 938 550 965 535 982 500 970 470 945 462 905 468 885 500 830 497 790 515 775Z"/>
      <path fill="#5b7ea6" d="M795 658L835 665 862 685 868 715 905 710 920 725 922 790 938 830 930 880 918 950 922 995 870 1010 840 990 800 965 772 940 772 915 757 890 775 855 770 800 768 765 785 745 790 700Z"/>
      <path fill="#92b8da" d="M868 685L900 680 935 670 958 690 965 740 975 775 965 820 1030 860 1040 900 1100 930 1150 960 1190 985 1192 990 1160 1008 1095 1005 1040 1020 968 1030 945 995 922 992 920 950 930 880 938 830 922 790 920 725 905 708 868 712Z"/>
      <path fill="#bad8ea" d="M958 690L985 697 1015 683 1080 700 1110 765 1125 785 1150 773 1190 795 1240 800 1265 785 1300 822 1288 858 1240 845 1195 830 1188 815 1165 860 1190 895 1230 905 1225 945 1205 978 1190 980 1150 960 1040 905 1030 860 985 838 962 820 975 775 962 740Z"/>
      <path fill="#cae2f0" d="M1298 822L1350 825 1413 848 1375 905 1335 955 1315 1045 1285 1102 1240 1065 1192 1040 1190 982 1210 978 1230 940 1230 905 1205 888 1185 895 1165 865 1165 855 1180 845 1187 815 1195 832 1240 850 1288 858Z"/>
      <path fill="#98bddd" d="M1210 1045L1285 1102 1292 1150 1280 1215 1288 1265 1255 1300 1225 1308 1195 1295 1175 1240 1142 1200 1155 1145 1190 1090Z"/>
      <path fill="#6b91b7" d="M858 1012L922 992 945 990 965 1030 1050 1020 1095 1002 1110 1015 1160 1010 1192 990 1192 1040 1210 1045 1190 1090 1155 1145 1145 1195 1085 1160 1040 1165 1000 1140 945 1160 900 1110 912 1080 900 1045Z"/>
      <path fill="#5d83aa" d="M945 1160L1000 1135 1040 1160 1085 1160 1132 1195 1122 1230 1130 1270 1080 1280 1035 1290 1000 1320 915 1358 875 1355 868 1320 850 1295 868 1260 880 1235 910 1230 912 1195Z"/>
      <path fill="#7a9fc6" d="M915 1358L1000 1320 1035 1290 1080 1278 1130 1270 1158 1278 1158 1305 1182 1330 1145 1385 1110 1425 1062 1455 1060 1500 1030 1530 1000 1550 990 1560 985 1548 1008 1505 990 1470 960 1440 920 1420 932 1390Z"/>
      <path fill="#567ba1" d="M1132 1195L1175 1218 1180 1250 1195 1285 1165 1300 1155 1300 1155 1275 1130 1265 1122 1225Z"/>
      <path fill="#5a7ea5" d="M705 985L730 980 735 940 770 935 800 965 870 1012 905 1045 912 1080 900 1112 945 1160 912 1195 910 1230 850 1240 835 1260 765 1225 755 1180 710 1120 740 1100 742 1050 715 1020Z"/>
      <path fill="#678db2" d="M475 950L500 972 535 982 560 955 635 928 640 960 700 978 705 1010 740 1050 740 1100 710 1130 680 1145 630 1160 550 1155 545 1130 500 1085 485 1045 455 1020 452 985Z"/>
      <path fill="#faedee" d="M290 815L385 805 405 810 410 830 465 885 455 910 465 940 475 955 455 985 452 1025 380 1032 378 1055 360 1090 320 1092 275 1100 255 1045 272 1020 285 920 290 890 285 840Z"/>
      <path fill="#dbedf8" d="M115 775L160 785 200 780 255 795 290 815 285 840 260 845 235 855 210 850 180 835 150 822 105 815Z"/>
      <path fill="#fae7e6" d="M65 822L130 818 175 832 210 855 205 885 210 905 178 940 160 1000 130 985 95 930 90 875Z"/>
      <path fill="#eef5fc" d="M180 935L210 908 245 920 285 925 275 1000 272 1020 258 1045 170 1053 160 995Z"/>
      <g stroke-width="2">
        <path fill="#fbc9c2" d="M235 852L262 850 285 838 290 890 262 885 250 865ZM205 880L215 858 238 852 240 868 220 880 238 892 238 917 215 900Z"/>
        <path fill="#f9e4e2" d="M238 893L262 885 290 893 290 930 262 920 240 915Z"/>
        <path fill="#ef7468" d="M218 880L240 867 254 870 267 885 258 893 233 893Z"/>
      </g>
      <path fill="#8ab1d4" d="M78 1135L120 1125 165 1110 168 1053 210 1045 258 1045 275 1100 325 1095 362 1092 395 1145 375 1170 380 1205 345 1220 362 1260 345 1285 325 1285 300 1260 220 1245 130 1240 90 1215 85 1165Z"/>
      <path fill="#678db3" d="M380 1032L455 1022 485 1045 495 1080 545 1130 555 1160 630 1158 638 1200 600 1260 590 1330 555 1318 470 1280 415 1290 362 1262 347 1218 380 1200 378 1165 397 1140 362 1090 378 1060Z"/>
      <path fill="#7a9fc6" d="M630 1150L680 1145 710 1132 740 1155 765 1190 765 1225 800 1240 835 1260 868 1258 850 1295 868 1320 870 1355 858 1405 825 1440 750 1445 710 1460 650 1420 612 1390 595 1335 592 1300 605 1250 638 1200Z"/>
      <path fill="#658bb0" d="M222 1255L260 1255 300 1265 325 1285 350 1275 358 1300 350 1340 375 1370 385 1430 380 1495 320 1510 290 1530 290 1570 240 1575 230 1600 210 1600 200 1500 190 1460 185 1405 135 1395 145 1370 195 1355 200 1325 222 1300 200 1275Z"/>
      <path fill="#5c80a8" d="M345 1272L415 1290 470 1280 545 1320 592 1335 598 1370 612 1390 590 1400 580 1440 585 1500 500 1515 485 1520 470 1535 430 1520 382 1510 385 1430 372 1370 350 1335 355 1310Z"/>
      <path fill="#7ca3c8" d="M612 1392L650 1420 710 1460 750 1445 825 1440 858 1480 845 1490 858 1550 850 1590 830 1580 770 1575 752 1580 728 1670 710 1640 655 1640 650 1670 620 1670 560 1672 555 1650 570 1590 530 1560 500 1515 585 1500 583 1440 590 1405Z"/>
      <path fill="#5e82aa" d="M-24 1480L-10 1430 35 1425 45 1385 100 1357 135 1368 135 1395 185 1405 195 1455 190 1500 205 1520 210 1602 120 1600 60 1605 20 1615 5 1610 0 1580 -25 1560 -45 1540 -45 1510 -30 1508Z"/>
    </g>
    <g transform="translate(1640 1000) scale(.44643 .42091)">
      <path fill="#5d83aa" d="M30 452L80 440 90 400 150 380 180 362 200 365 240 385 275 378 270 400 275 470 245 470 215 520 190 592 130 605 95 578 60 580 58 555 25 540 20 490Z"/>
      <path fill="#557aa2" d="M55 175L80 160 115 152 165 158 230 155 240 190 285 245 292 285 255 340 275 375 240 385 195 362 150 375 140 350 95 330 80 290 75 255 50 215Z"/>
      <path fill="#698fb4" d="M235 125L290 120 295 80 325 65 385 60 430 75 500 60 530 120 570 145 565 185 530 205 535 290 510 295 480 265 380 262 340 215 330 225 290 245 260 210 240 190 230 150Z"/>
      <path fill="#8ab0d1" d="M285 245L325 228 345 210 365 245 440 265 490 280 515 300 520 350 545 400 567 430 552 480 480 465 395 480 375 497 345 475 280 450 270 390 280 370 255 340 292 290Z"/>
      <path fill="#95bbdb" d="M530 210L550 205 555 230 600 235 655 235 635 250 627 270 645 310 645 385 665 410 705 415 710 440 722 455 725 480 690 510 665 510 640 480 600 472 552 482 567 430 545 395 520 345 517 295 530 285Z"/>
      <path fill="#89b0d2" d="M755 130L830 132 850 160 870 200 895 185 910 200 945 200 985 160 1003 178 995 200 965 240 937 255 940 305 925 370 905 400 880 370 845 322 825 355 795 345 755 342 750 315 722 300 728 240 735 210Z"/>
      <path fill="#faa496" d="M652 197L690 198 712 193 715 225 728 240 720 300 750 315 755 342 795 345 800 370 785 400 745 410 740 430 725 447 705 435 700 415 665 410 648 385 645 310 627 272 655 235Z"/>
      <path fill="#9cc2df" d="M1015 185L1025 170 1080 147 1135 153 1130 180 1145 200 1135 235 1150 265 1175 300 1175 320 1145 350 1115 360 1080 318 1065 325 1035 378 960 355 940 290 937 255 1000 240 1030 212Z"/>
      <path fill="#7197bf" d="M940 305L948 345 975 358 1035 380 1060 330 1082 318 1090 335 1115 360 1135 355 1140 385 1170 400 1175 435 1205 460 1195 520 1130 548 1090 560 1040 555 1000 530 1008 470 975 442 950 465 920 450 900 400 925 375 935 310Z"/>
      <path fill="#e3f0f9" d="M845 322L880 370 920 455 950 465 965 440 1005 465 1003 530 1020 550 1010 580 1040 600 1040 625 980 635 930 672 870 650 865 570 815 565 800 500 770 488 727 495 722 450 740 440 745 410 780 400 800 370 790 350 830 350Z"/>
      <path fill="#557aa1" d="M1020 555L1060 565 1100 550 1120 580 1125 615 1170 635 1185 675 1160 690 1130 710 1100 750 1045 740 1020 765 990 745 950 790 945 825 905 830 905 800 865 775 865 740 895 735 905 695 935 675 975 640 1040 628 1038 600 1012 580Z"/>
      <path fill="#577ca2" d="M1160 690L1150 720 1152 780 1112 830 1130 880 1155 912 1115 920 1100 945 1050 952 1015 955 975 978 960 960 925 962 880 935 885 890 872 850 905 830 945 825 955 780 990 745 1020 768 1045 738 1100 750 1130 708Z"/>
      <path fill="#c4ddec" d="M1145 780L1185 825 1250 845 1305 833 1312 850 1275 900 1275 945 1240 965 1200 985 1195 1010 1155 1032 1150 1005 1120 980 1108 945 1115 920 1155 912 1130 880 1112 835 1120 800Z"/>
      <path fill="#c0dbec" d="M930 962L955 960 975 978 1015 950 1050 955 1095 945 1120 980 1150 1000 1155 1030 1150 1050 1120 1055 1092 1095 1107 1100 1100 1120 1045 1145 1000 1150 998 1165 975 1150 940 1158 930 1140 908 1125 922 1095 910 1060 928 1052 912 1020 910 985ZM1005 1170L1018 1172 1012 1180ZM1045 1172L1070 1160 1062 1172Z"/>
      <path fill="#7ca4c9" d="M705 788L735 815 800 798 805 820 845 822 872 850 885 890 882 930 925 965 920 980 880 983 830 960 780 943 760 920 722 907 740 885 715 850 715 815Z"/>
      <path fill="#f4897b" d="M722 907L760 920 782 945 830 960 880 983 930 968 930 978 910 990 913 1045 928 1053 910 1065 922 1095 905 1125 845 1112 835 1075 780 1080 762 1052 745 1055 745 1078 690 1072 685 1045 620 1040 660 1005 665 975 695 970 703 925Z"/>
      <path fill="#7aa0c5" d="M732 497L770 488 800 500 808 565 865 570 868 650 930 675 900 700 892 735 862 745 865 775 905 800 905 830 870 848 845 825 805 818 800 795 770 790 735 812 705 790 712 720 725 680 745 605 735 550ZM748 780L765 757 785 772 770 797Z"/>
      <path fill="#6a90b4" d="M722 480L735 500 735 550 747 605 725 680 712 720 703 800 680 795 655 785 625 800 580 778 568 710 550 660 600 620 665 530 670 515 690 512Z"/>
      <path fill="#93b9d9" d="M565 752L580 765 585 785 625 800 655 785 700 795 712 820 718 855 740 885 705 925 695 970 668 975 660 1005 620 1040 595 1025 608 985 590 950 540 925 520 898 490 915 445 905 460 880 430 850 445 840 500 848 530 835 560 820Z"/>
      <path fill="#d0e5f3" d="M430 925L445 908 490 920 520 898 540 925 590 950 608 985 598 1012 560 1020 500 1060 475 1095 440 1092 420 1110 380 1085 350 1075 325 1095 285 1070 305 1040 298 990 330 992 385 970 385 938Z"/>
      <path fill="#6388ae" d="M215 692L270 690 290 650 320 608 355 630 370 690 395 740 400 790 450 840 435 860 460 880 445 908 425 930 388 935 385 970 355 972 320 955 285 910 250 860 200 828 165 835 150 795 145 745 205 710Z"/>
      <path fill="#4f7398" d="M372 690L400 625 445 600 460 635 500 630 545 655 552 700 570 745 555 775 562 820 530 840 480 848 450 838 400 790 395 740Z"/>
      <path fill="#567aa2" d="M280 450L345 475 375 497 395 485 420 520 437 560 445 600 400 625 380 655 368 690 355 630 320 608 285 650 270 690 215 692 195 650 190 600 215 560 215 520 245 470 275 470Z"/>
      <path fill="#5d82aa" d="M395 480L480 462 550 482 640 475 645 500 668 515 655 560 600 622 548 660 500 628 460 635 440 590 430 540Z"/>
      <path fill="#6d93b9" d="M85 905L108 850 160 845 200 828 250 860 278 890 290 930 325 960 358 975 300 992 303 1048 240 1050 220 1060 175 1052 180 1035 150 1020 118 985 108 950Z"/>
      <path fill="#6b91b6" d="M112 1102L130 1070 160 1052 220 1060 285 1050 290 1075 325 1095 345 1070 380 1085 420 1112 395 1150 383 1195 382 1220 340 1202 300 1222 240 1222 240 1255 205 1272 150 1242 150 1222 170 1215 165 1150 125 1125Z"/>
      <path fill="#759dc2" d="M120 1300L205 1270 240 1258 242 1222 310 1220 345 1202 382 1220 382 1300 407 1335 365 1328 310 1345 305 1362 280 1365 240 1340 195 1358 165 1355 120 1315Z"/>
    </g>
    <g transform="translate(1020 1000) scale(.44643 .42091)">
      <path fill="#557aa0" d="M1330 1195L1355 1185 1362 1155 1380 1135 1415 1142 1405 1125 1435 1110 1422 1088 1440 1088 1460 1105 1500 1098 1520 1130 1553 1145 1558 1212 1540 1222 1540 1240 1595 1270 1540 1298 1500 1290 1480 1275 1455 1285 1440 1260 1400 1255 1335 1225Z"/>
      <path fill="#f9f0ef" d="M1355 945L1410 948 1430 930 1470 912 1482 940 1500 975 1505 1000 1568 1035 1565 1052 1530 1050 1500 1100 1460 1105 1440 1085 1425 1090 1435 1110 1405 1125 1415 1140 1380 1135 1360 1150 1355 1180 1330 1190 1330 1222 1298 1220 1293 1262 1255 1258 1258 1215 1280 1212 1290 1185 1273 1165 1255 1135 1290 1085 1320 1060 1362 1065 1378 1015 1402 1000Z"/>
    </g>
  </g>
  <!-- labels -->
  <g class="place">
    <text x="1861" y="493.500" textLength="150">Belgique</text>
    <text x="2198" y="1020.500" textLength="113">Suisse</text>
    <text class="france" x="1703" y="1036.500" textLength="125">France</text>
  </g>
</svg>
        <span class="credit">© 2024 Mapbox © OpenStreetMap</span>
        <span class="unknown">1 inconnu(e)s</span>
      </div>
    </div>
    <div class="filter region">
      <h3>Nom Region</h3>
      <ul>
        <li class="on all"><i></i>(Tout)</li><li class="on"><i></i>NULL</li><li class="on"><i></i>Auvergne-Rhône-Al...</li><li class="on"><i></i>Bourgogne-Franche...</li>
        <li class="on"><i></i>Bretagne</li><li class="on"><i></i>Centre-Val de Loire</li><li class="on"><i></i>Corse</li><li class="on"><i></i>Grand Est</li>
        <li class="on"><i></i>Guadeloupe</li><li class="on"><i></i>Guyane</li><li class="on"><i></i>Hauts-de-France</li><li class="on"><i></i>Île-de-France</li>
        <li class="on"><i></i>La Réunion</li><li class="on"><i></i>Martinique</li><li class="on"><i></i>Mayotte</li><li class="on"><i></i>Normandie</li>
        <li class="on"><i></i>Nouvelle-Aquitaine</li><li class="on"><i></i>Occitanie</li><li class="on"><i></i>Pays de la Loire</li><li class="on"><i></i>Provence-Alpes-Côt...</li>
      </ul>
    </div>
  </div>
</div>
</div>
</main>

<nav class="sheetbar">
  <div class="st source"><svg width="20" height="24" viewBox="0 0 20 24" fill="none" stroke="#666" stroke-width="2"><ellipse cx="9" cy="5" rx="7.500" ry="3.500"/><path d="M1.500 5v13c0 5 15 5 15 0V5"/></svg><span>Source de données</span></div>
  <div class="st s-reg"><span>Population par région en carte</span></div>
  <div class="st s-dep"><span>Population par département en ...</span></div>
  <div class="st s-on"><svg width="24" height="24" viewBox="0 0 24 24" fill="none" stroke="#666" stroke-width="2"><rect x="2" y="2" width="20" height="20" rx="1"/><path d="M12 2v20M2 12h20"/></svg><span>Tableau de bord 1</span></div>
  <div class="st add"><svg width="32" height="32" viewBox="0 0 32 32" fill="none" stroke="#666" stroke-width="2"><path d="M13 23H2V2h21v12M8 17v-4M12.500 17V8M17 15v-4"/><path stroke-width="4" d="M23 16v14M16 23h14"/></svg></div>
  <div class="st add"><svg width="32" height="32" viewBox="0 0 32 32" fill="none" stroke="#666" stroke-width="2"><path d="M13 23H2V2h20v10H2M12 2v20"/><path stroke-width="4" d="M23 16v14M16 23h14"/></svg></div>
  <div class="st add"><svg width="32" height="32" viewBox="0 0 32 32" fill="none" stroke="#666" stroke-width="2"><path d="M12 6L2 2v18l10 4V6l10-4v12"/><path stroke-width="4" d="M23 16v14M16 23h14"/></svg></div>
</nav>

<footer class="status">
  <i class="c1"></i><i class="c2"></i><i class="c3"></i><i class="c4"></i><i class="c5"></i>
  <svg width="142" height="40" viewBox="3065 2060 142 40" fill="#bcbcbc"><path d="M3082 2072h2v14h-2zM3094 2072v14l-9-7zM3124 2072v14l-8-7zM3148 2072v14l8-7zM3178 2072v14l9-7zM3188 2072h2v14h-2z"/></svg><i class="c6"></i>
  <svg width="151" height="40" viewBox="3209 2060 151 40" fill="#bcbcbc"><path d="M3225 2069h6v6h-6zM3233 2069h6v6h-6zM3241 2069h6v6h-6zM3225 2077h6v6h-6zM3233 2077h6v6h-6zM3241 2077h6v6h-6zM3225 2085h6v6h-6zM3233 2085h6v6h-6zM3241 2085h6v6h-6zM3267 2069h22v14h-22zM3267 2085h6v6h-6zM3275 2085h6v6h-6zM3283 2085h6v6h-6z"/><rect x="3309" y="2069" width="22" height="22" rx="1" fill="#666"/></svg>
</footer>
</div>
</body>
</html>
```

FILE: styles.css
```css
* { box-sizing: border-box; }
body { margin: 0; background: #f5f5f5; font-family: Roboto, "Liberation Sans", sans-serif; font-size: 24px; color: #333; letter-spacing: .37px; }
ul, h1, h2, h3 { margin: 0; padding: 0; list-style: none; font-weight: 400; font-size: 24px; }
svg { display: block; flex: none; }
.app { width: 3360px; height: 2100px; display: grid; grid-template-rows: 80px 1918px 62px 40px; overflow: hidden; }

/* toolbar */
.toolbar { display: flex; align-items: flex-start; background: #f4f4f4; }
.sep { flex: none; width: 2px; height: 70px; margin-top: 6px; background: #d3d3d3; }
.combo { flex: none; width: 267px; height: 47px; margin: 16px 30px 0 15px; border: 2px solid #d4d4d4; border-radius: 2px; display: flex; align-items: center; justify-content: flex-end; padding-right: 8px; }
.grow { flex: 1; }
.showme { width: 196px; padding-left: 11px; line-height: 82px; color: #111; letter-spacing: .6px; }

/* side pane */
.body { display: flex; }
.side { width: 678px; display: flex; flex-direction: column; background: #fafafa; border-top: 2px solid #d4d4d4; border-right: 2px solid #d4d4d4; }
.tabs { display: flex; height: 56px; }
.tab-on { width: 372px; height: 50px; line-height: 52px; padding-left: 36px; font-weight: 700; color: #2b2b2b; letter-spacing: .8px; }
.tab-off { flex: 1; display: flex; align-items: center; justify-content: space-between; padding: 0 14px 0 24px; border-left: 2px solid #d4d4d4; border-bottom: 2px solid #d4d4d4; }
.devices { display: flex; flex-direction: column; padding: 24px 36px 25px; }
.device { height: 38px; line-height: 36px; padding-left: 26px; }
.device-on { background: #e6e6e6; }
.phone { height: 35px; padding-left: 46px; }
.preview { align-self: center; margin: 27px 0 0; width: 312px; height: 46px; padding: 0 0 2px; border: 2px solid #c8c8c8; border-radius: 2px; background: #fafafa; font: inherit; letter-spacing: .37px; color: inherit; }
.block { height: 146px; padding: 0 36px; border-top: 2px solid #ccc; }
.block h2 { height: 59px; line-height: 61px; font-weight: 700; letter-spacing: .5px; }
.select { height: 43px; display: flex; align-items: center; justify-content: space-between; padding: 0 0 1px 2px; border-bottom: 2px solid #ccc; letter-spacing: 1.06px; white-space: nowrap; }
.sheets { flex: 1; }
.sheet { height: 40px; display: flex; align-items: center; }
.block h2 + .sheet { margin-top: 10px; }
.sheet svg { margin-right: 10px; }
.objects { height: 587px; padding-left: 24px; border-top: 2px solid #ccc; }
.objects h2 { height: 51px; line-height: 49px; font-size: 26px; font-weight: 700; }
.scroller { height: 406px; margin-bottom: 16px; display: flex; justify-content: space-between; overflow: hidden; letter-spacing: .3px; }
.scroller ul { margin-top: -28px; }
.scroller li { height: 40px; display: flex; align-items: center; padding-left: 8px; }
.scroller li svg { width: 24px; height: 24px; margin-right: 14px; fill: none; stroke: #666; stroke-width: 2; overflow: visible; }
.scroller .solid { fill: #666; stroke: none; }
.track { width: 42px; padding-top: 120px; }
.thumb { display: block; width: 14px; height: 286px; border-radius: 7px; background: #808080; }
.segment { display: flex; width: 628px; height: 48px; border-radius: 3px; text-align: center; line-height: 46px; }
.segment b { width: 314px; line-height: 48px; background: #05648e; color: #fff; border-radius: 3px 0 0 3px; }
.segment span { flex: 1; border: 2px solid #767676; border-radius: 0 3px 3px 0; line-height: 43px; }
.show-title { display: flex; align-items: center; height: 28px; margin-top: 18px; padding-left: 12px; letter-spacing: .3px; }
.show-title i { width: 28px; height: 28px; margin-right: 12px; border: 2px solid #333; border-radius: 2px; background: #fff; }

/* dashboard */
.workspace { flex: 1; background: #f5f5f5; }
.board { width: 2001px; height: 1600px; padding-left: 24px; background: #fff; letter-spacing: .65px; }
.board h3 { font-weight: 600; }
.legend h3 { height: 67px; padding-top: 19px; line-height: 46px; letter-spacing: .5px; }
.scale { display: flex; height: 34px; line-height: 36px; letter-spacing: .9px; word-spacing: -3.500px; }
.min { width: 89px; padding-right: 6px; text-align: right; }
.max { padding-left: 8px; }
.ramp { width: 1738px; border: 2px solid #aaa394; background: linear-gradient(90deg, #35608e 0%, #5987b3 13.5%, #6fa0c9 21.5%, #8ebbdb 30.500%, #b3d4ea 38.500%, #cfe8f7 45%, #fff 50%, #fddfdc 55%, #fdc5bd 61%, #fba08d 68.500%, #f67862 77%, #e8504c 86%, #cc2c43 93%, #a8133d 100%); display: flex; justify-content: center; }
.mid { width: 2px; height: 8px; margin-top: 27px; background: #000; }
.columns { display: flex; margin-top: 82px; }
.filter { width: 304px; }
.filter h3 { height: 49px; line-height: 50px; }
.filter li { display: flex; align-items: center; height: 38px; padding: 1px 0 0 12px; white-space: nowrap; }
.filter .dep li { padding-left: 11px; }
.filter .all { background: #d6d6d6; }
.filter i { flex: none; width: 30px; height: 30px; margin: -2px 11px 0 0; border: 2px solid #ccc; border-radius: 2px; background: #fff; }
.filter .on i { border-color: #666; }
.on i::after { content: ""; display: block; width: 20px; height: 20px; margin: 3px; background: #666; clip-path: polygon(8% 50%, 22% 44%, 40% 68%, 80% 4%, 92% 10%, 42% 94%); }
.dep { height: 1344px; overflow: hidden; }
.region { margin-left: 19px; }
.viz { width: 1309px; margin-left: 16px; }
.viz h1 { height: 93px; padding-left: 8px; line-height: 91px; font-size: 40px; font-weight: 300; letter-spacing: 1.55px; white-space: nowrap; }
.map { position: relative; height: 1297px; background: #fff; outline: 2px solid #e0e0e0; outline-offset: -2px; overflow: hidden; }
.place { font-family: "Noto Sans", sans-serif; font-size: 35px; letter-spacing: 0; fill: #808080; stroke: #f2f2f2; stroke-width: 4px; paint-order: stroke; }
.place .france { fill: #4a6c95; stroke: none; }
.credit { position: absolute; left: 6px; bottom: 4px; height: 24px; padding: 0 8px 0 5px; background: rgba(255, 255, 255, .85); font: 16px/25px "Liberation Sans", sans-serif; letter-spacing: .1px; color: #555; }
.unknown { position: absolute; right: 9px; bottom: 9px; width: 176px; height: 29px; border-radius: 5px; background: linear-gradient(90deg, #bbb, #a0a0a0); color: #fff; font-size: 20px; font-weight: 700; line-height: 30px; text-align: center; letter-spacing: 1.4px; }

/* sheet tabs and status bar */
.sheetbar { display: flex; background: #e6e6e6; border-top: 2px solid #c9c9c9; border-bottom: 2px solid #d2d2d2; color: #555; }
.st { display: flex; align-items: center; border-right: 2px solid #c8c8c8; white-space: nowrap; }
.source { width: 282px; padding-left: 20px; }
.source svg { margin-right: 8px; }
.s-reg { width: 373px; padding-left: 12px; }
.s-dep { width: 400px; padding-left: 11px; }
.s-on { width: 269px; padding-left: 15px; background: #fafafa; font-weight: 700; letter-spacing: .85px; }
.s-on svg { margin-right: 8px; }
.add { width: 64px; padding-left: 17px; }
.status { display: flex; justify-content: flex-end; background: #ebebeb; }
.status i { width: 2px; background: #cacaca; }
.c1 { margin-right: 252px; }
.c2, .c3 { margin-right: 52px; }
.c4 { margin-right: 91px; }
```
